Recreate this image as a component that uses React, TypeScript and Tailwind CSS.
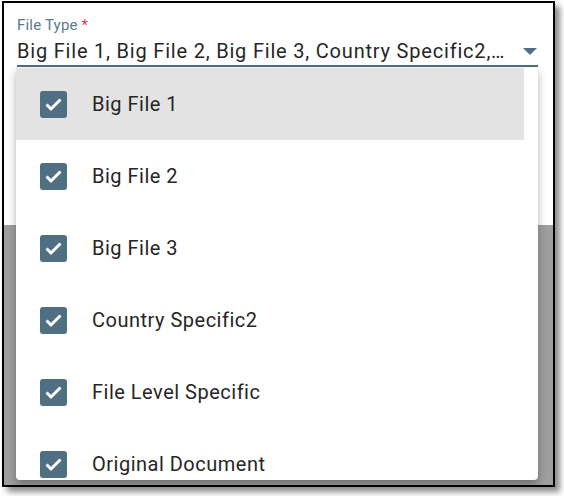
import React from "react";

const items = [
  "Big File 1",
  "Big File 2",
  "Big File 3",
  "Country Specific2",
  "File Level Specific",
  "Original Document",
];

const CheckBox: React.FC = () => (
  <div className="w-[27px] h-[27px] rounded-[3px] bg-[#4f6f82] flex items-center justify-center shrink-0">
    <svg width="27" height="27" viewBox="0 0 27 27">
      <path d="M6.5 13.5l4.5 4.5 9.5-9.5" fill="none" stroke="#ffffff" strokeWidth="3" />
    </svg>
  </div>
);

const App: React.FC = () => {
  return (
    <div className="w-[564px] h-[496px] bg-white pl-[2px] pt-[1px] font-['Roboto',sans-serif]">
      {/* Framed screenshot */}
      <div className="relative w-[553px] h-[486px] border-2 border-black shadow-[5px_5px_6px_rgba(0,0,0,0.45)] overflow-hidden flex flex-col">
        {/* Select field */}
        <div className="h-[222px] bg-white pl-[13px] pr-[15px] pt-[14px]">
          <div className="text-[15px] leading-[17px] text-[#5c7a8c] tracking-[0.2px]">
            File Type <span className="text-[#e53935]">*</span>
          </div>
          <div className="flex items-center h-[31px] border-b-[2px] border-[#4f6f82] mt-[2px]">
            <span className="flex-1 text-[20px] text-[#262626] whitespace-nowrap overflow-hidden tracking-[0.8px]">
              Big File 1, Big File 2, Big File 3, Country Specific2,…
            </span>
            <svg width="14" height="7" viewBox="0 0 14 7" className="mr-[1px] mt-[1px]">
              <path d="M0 0h14L7 7z" fill="#4f6f82" />
            </svg>
          </div>
        </div>
        {/* Backdrop */}
        <div className="flex-1 bg-[#9e9e9e]" />

        {/* Dropdown menu */}
        <div className="absolute left-[12px] top-[65px] w-[522px] h-[412px] bg-white rounded-b-[4px] shadow-[0_4px_8px_rgba(0,0,0,0.3)] overflow-hidden">
          <ul className="w-[508px]">
            {items.map((label, i) => (
              <li
                key={label}
                className={`h-[72px] flex items-center pl-[24px] gap-[25px] ${i === 0 ? "bg-[#e3e3e3]" : ""}`}
              >
                <CheckBox />
                <span className="text-[20px] text-[#262626] tracking-[0.5px]">{label}</span>
              </li>
            ))}
          </ul>
        </div>
      </div>
    </div>
  );
};

export default App;
